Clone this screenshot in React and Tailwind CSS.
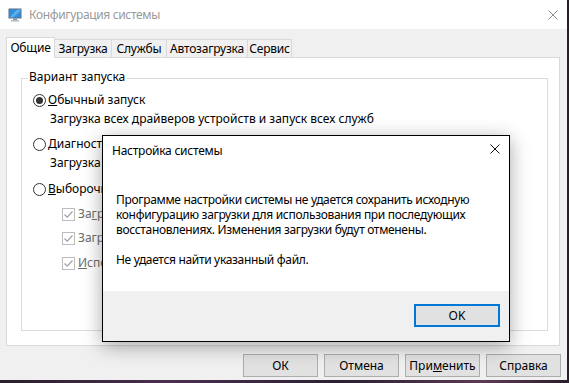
import React from "react";

const font = "font-['Noto_Sans','DejaVu_Sans',sans-serif]";

function Radio({ checked }) {
  return (
    <span className="relative flex h-[13px] w-[13px] shrink-0 items-center justify-center rounded-full border border-[#333333] bg-white">
      {checked && <span className="h-[7px] w-[7px] rounded-full bg-[#333333]" />}
    </span>
  );
}

function Check() {
  return (
    <span className="flex h-[13px] w-[13px] shrink-0 items-center justify-center border border-[#bcbcbc] bg-white">
      <svg width="11" height="11" viewBox="0 0 11 11">
        <polyline points="1.5,5.5 4.2,8.2 9.5,2.5" fill="none" stroke="#a0a0a0" strokeWidth="1.2" />
      </svg>
    </span>
  );
}

function AppIcon() {
  return (
    <svg width="14" height="14" viewBox="0 0 14 14">
      <rect x="0.5" y="0.5" width="13" height="10" rx="0.5" fill="#5d6f86" />
      <rect x="1.5" y="1.5" width="11" height="8" fill="#2f8fe0" />
      <path d="M1.5 9.5 L9 1.5 L12.5 1.5 L12.5 3 L5 9.5 Z" fill="#7cc3f5" opacity="0.6" />
      <rect x="5" y="10.5" width="4" height="1.5" fill="#8a94a0" />
      <rect x="3" y="12" width="8" height="1.5" fill="#b5bcc4" />
    </svg>
  );
}

function Tab({ label, selected, className = "" }) {
  if (selected) {
    return (
      <div className="flex h-[21px] w-[49px] items-center justify-center border-l border-r border-t border-[#d9d9d9] bg-white text-[12px] tracking-[-0.2px] text-black">
        {label}
      </div>
    );
  }
  return (
    <div
      className={`mb-[1px] flex h-[18px] items-center justify-center border-t border-[#d9d9d9] bg-[#f0f0f0] text-[12px] tracking-[-0.2px] text-black ${className}`}
    >
      {label}
    </div>
  );
}

function Btn({ children }) {
  return (
    <div className="flex h-[23px] w-[75px] items-center justify-center border border-[#adadad] bg-[#e1e1e1] text-[12px] text-black">
      {children}
    </div>
  );
}

export default function App() {
  return (
    <div
      className={`relative h-[383px] w-[569px] overflow-hidden bg-[linear-gradient(90deg,#2a1d2c,#4a2f4f_30%,#2b1f33_60%,#5a3a55_85%,#2a1d2a)] ${font}`}
    >
      <div className="flex h-[380px] w-[567px] flex-col bg-[#f0f0f0]">
        {/* Title bar */}
        <div className="flex h-[29px] shrink-0 items-center bg-white pl-[8px]">
          <AppIcon />
          <span className="ml-[7px] text-[12px] tracking-[-0.35px] text-[#999999]">Конфигурация системы</span>
          <div className="ml-auto mr-[9px] flex h-[10px] w-[10px] items-center justify-center">
            <svg width="10" height="10" viewBox="0 0 10 10">
              <path d="M0.5 0.5 L9.5 9.5 M9.5 0.5 L0.5 9.5" stroke="#8c8c8c" strokeWidth="1" />
            </svg>
          </div>
        </div>

        {/* Body */}
        <div className="flex flex-1 flex-col px-[6px] pt-[8px]">
          <div className="relative z-10 -mb-px flex items-end">
            <Tab label="Общие" selected />
            <Tab label="Загрузка" className="w-[56px]" />
            <Tab label="Службы" className="w-[55px] border-l" />
            <Tab label="Автозагрузка" className="w-[81px] border-l" />
            <Tab label="Сервис" className="w-[45px] border-l border-r" />
          </div>
          <div className="h-[289px] w-[554px] border border-[#d9d9d9] bg-white pl-[14px] pt-[20px]">
            <div className="relative h-[253px] w-[527px] border border-[#dcdcdc]">
              <span className="absolute -top-[10px] left-[6px] bg-white px-[1px] text-[12px] leading-[16px] text-black">
                Вариант запуска
              </span>
              <div className="flex flex-col text-[12px] text-black">
                <div className="ml-[11px] mt-[13px] flex h-[16px] items-center gap-[2px]">
                  <Radio checked />
                  <span>
                    <span className="underline">О</span>бычный запуск
                  </span>
                </div>
                <div className="ml-[28px] mt-[3px] flex h-[16px] items-center whitespace-nowrap">
                  Загрузка всех драйверов устройств и запуск всех служб
                </div>
                <div className="ml-[11px] mt-[9px] flex h-[16px] items-center gap-[2px]">
                  <Radio />
                  <span>
                    <span className="underline">Д</span>иагностический запуск
                  </span>
                </div>
                <div className="ml-[28px] mt-[3px] flex h-[16px] items-center whitespace-nowrap">
                  Загрузка только основных драйверов и служб
                </div>
                <div className="ml-[11px] mt-[10px] flex h-[16px] items-center gap-[2px]">
                  <Radio />
                  <span>
                    <span className="underline">В</span>ыборочный запуск
                  </span>
                </div>
                <div className="ml-[40px] mt-[9px] flex h-[16px] items-center gap-[3px] text-[#6d6d6d]">
                  <Check />
                  <span>
                    За<span className="underline">г</span>рузить системные службы
                  </span>
                </div>
                <div className="ml-[40px] mt-[8px] flex h-[16px] items-center gap-[3px] text-[#6d6d6d]">
                  <Check />
                  <span>Загрузить элементы автозагрузки</span>
                </div>
                <div className="ml-[40px] mt-[9px] flex h-[16px] items-center gap-[3px] text-[#6d6d6d]">
                  <Check />
                  <span>
                    <span className="underline">И</span>спользовать оригинальную конфигурацию загрузки
                  </span>
                </div>
              </div>
            </div>
          </div>
          <div className="mt-[8px] flex justify-end gap-[6px]">
            <Btn>ОК</Btn>
            <Btn>Отмена</Btn>
            <Btn>
              При<span className="underline">м</span>енить
            </Btn>
            <Btn>Справка</Btn>
          </div>
        </div>
      </div>

      {/* Modal dialog */}
      <div className="absolute left-[102px] top-[135px] z-20 flex h-[207px] w-[408px] flex-col border border-black bg-white shadow-[0_4px_18px_rgba(0,0,0,0.35)]">
        <div className="flex h-[30px] shrink-0 items-start bg-white pl-[9px] pr-[9px]">
          <span className="mt-[7px] text-[12px] leading-[16px] tracking-[-0.25px] text-black">Настройка системы</span>
          <svg className="ml-auto mt-[8px]" width="10" height="10" viewBox="0 0 10 10">
            <path d="M0.5 0.5 L9.5 9.5 M9.5 0.5 L0.5 9.5" stroke="#111111" strokeWidth="1" />
          </svg>
        </div>
        <div className="h-[125px] shrink-0 pl-[13px] pt-[26px] text-[12px] leading-[15px] tracking-[-0.32px] text-black">
          <p className="whitespace-nowrap">
            Программе настройки системы не удается сохранить исходную
            <br />
            конфигурацию загрузки для использования при последующих
            <br />
            восстановлениях. Изменения загрузки будут отменены.
          </p>
          <p className="mt-[15px] whitespace-nowrap">Не удается найти указанный файл.</p>
        </div>
        <div className="flex flex-1 items-start justify-end bg-[#f0f0f0] pr-[9px] pt-[13px]">
          <div className="flex h-[23px] w-[86px] items-center justify-center border-2 border-[#0078d7] bg-[#e1e1e1] text-[12px] text-black">
            OK
          </div>
        </div>
      </div>
    </div>
  );
}
